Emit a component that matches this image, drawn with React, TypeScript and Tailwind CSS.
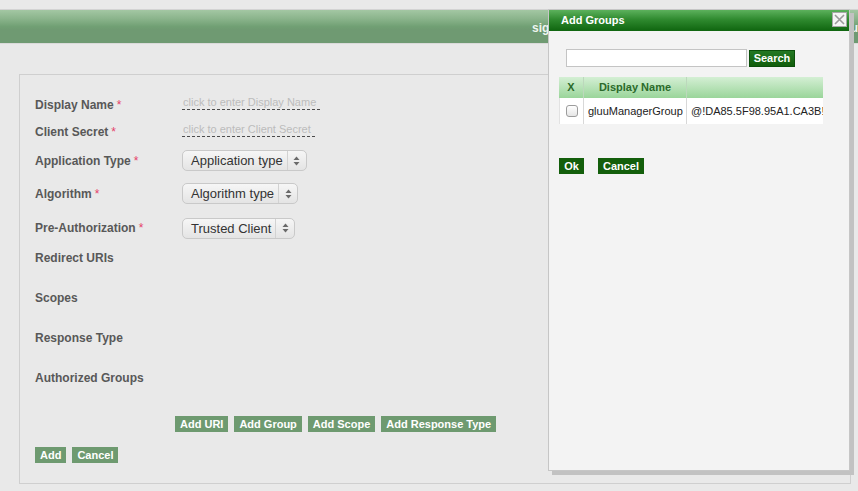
import React from "react";

const font = { fontFamily: '"Liberation Sans", Arial, Helvetica, sans-serif' };

function Req() {
  return <span className="ml-[3px] text-[12px] font-normal text-[#e5426b]">*</span>;
}

function Label({ children, req }: { children: React.ReactNode; req?: boolean }) {
  return (
    <div className="w-[147px] shrink-0 text-[12px] font-bold leading-[14px] text-[#585858]">
      {children}
      {req && <Req />}
    </div>
  );
}

function Placeholder({ text }: { text: string }) {
  return (
    <span className="-mt-[4px] inline-block border-b border-dashed border-[#4a4a4a] pr-[4px] pl-[1px] text-[11px] leading-[13px] text-[#bcbcbc]">
      {text}
    </span>
  );
}

function Arrows() {
  return (
    <svg width="7" height="10" viewBox="0 0 7 10">
      <path d="M3.5 0.5 L6.5 4 L0.5 4 Z" fill="#6a6a6a" />
      <path d="M3.5 9.5 L6.5 6 L0.5 6 Z" fill="#6a6a6a" />
    </svg>
  );
}

function Select({ text }: { text: string }) {
  return (
    <div className="flex h-[21px] items-center rounded-[5px] border border-[#c9c9c9] bg-[linear-gradient(to_bottom,#f6f6f6,#e4e4e4)] text-[13px] text-[#333]">
      <span className="pl-[8px] pr-[4px] leading-[19px]">{text}</span>
      <span className="flex h-full w-[19px] items-center justify-center border-l border-[#d2d2d2]">
        <Arrows />
      </span>
    </div>
  );
}

function GreenBtn({ children }: { children: React.ReactNode }) {
  return (
    <span className="flex h-[16px] items-center bg-[#6e9a70] px-[5px] text-[11px] font-bold text-white">
      {children}
    </span>
  );
}

function DarkBtn({ children, className = "" }: { children: React.ReactNode; className?: string }) {
  return (
    <span
      className={`flex h-[16px] items-center justify-center bg-[#135e0b] text-[11px] font-bold text-white ${className}`}
    >
      {children}
    </span>
  );
}

export default function App() {
  return (
    <div className="relative h-[491px] w-[858px] overflow-hidden bg-[#e9e9e9]" style={font}>
      {/* Top bar */}
      <div className="mt-[9px] flex h-[35px] items-center border-y border-t-[#d3d3d3] border-b-[#dadada] bg-[linear-gradient(to_bottom,#a3c7a3_0%,#8cb58d_25%,#71a074_50%,#6f9a72_60%,#6f9a72_100%)] text-[12px] font-bold text-[#eef4ee]">
        <span className="ml-[532px] pt-[2px]">signed in as admin</span>
        <span className="ml-auto mr-[-4px] pt-[2px]">Logout</span>
      </div>

      {/* Form panel */}
      <div className="ml-[19px] mt-[30px] h-[410px] w-[832px] border border-[#cfcfcf] pl-[15px] pt-[16px]">
        <div className="flex h-[27px] items-center">
          <Label req>Display Name</Label>
          <Placeholder text="click to enter Display Name" />
        </div>
        <div className="flex h-[27px] items-center">
          <Label req>Client Secret</Label>
          <Placeholder text="click to enter Client Secret" />
        </div>
        <div className="flex h-[31px] items-center">
          <Label req>Application Type</Label>
          <Select text="Application type" />
        </div>
        <div className="flex h-[35px] items-center">
          <Label req>Algorithm</Label>
          <Select text="Algorithm type" />
        </div>
        <div className="flex h-[34px] items-center">
          <Label req>Pre-Authorization</Label>
          <Select text="Trusted Client" />
        </div>

        <div className="pt-[6px]">
          {["Redirect URIs", "Scopes", "Response Type", "Authorized Groups"].map((l) => (
            <div key={l} className="h-[40px]">
              <Label>{l}</Label>
            </div>
          ))}
        </div>

        <div className="ml-[140px] mt-[5px] flex gap-[6px]">
          <GreenBtn>Add URI</GreenBtn>
          <GreenBtn>Add Group</GreenBtn>
          <GreenBtn>Add Scope</GreenBtn>
          <GreenBtn>Add Response Type</GreenBtn>
        </div>

        <div className="mt-[15px] flex gap-[6px]">
          <GreenBtn>Add</GreenBtn>
          <GreenBtn>Cancel</GreenBtn>
        </div>
      </div>

      {/* Add Groups dialog */}
      <div className="absolute left-[548px] top-[9px] h-[462px] w-[302px] border border-[#c6c6c6] bg-[#f3f3f3] shadow-[4px_4px_0_#c2c2c2]">
        <div className="relative flex h-[21px] items-center bg-[linear-gradient(to_bottom,#5cb15c,#2f8a2f_45%,#0f650f)] pl-[12px] text-[11px] font-bold text-white">
          Add Groups
          <span className="absolute right-[2px] top-[2px] flex h-[15px] w-[15px] items-center justify-center border border-[#a8a8a8] bg-[#f5f5f5]">
            <svg width="11" height="11" viewBox="0 0 11 11">
              <path d="M1 1 L10 10 M10 1 L1 10" stroke="#9a9a9a" strokeWidth="1.6" />
            </svg>
          </span>
        </div>

        <div className="ml-[17px] mt-[18px] flex items-center">
          <div className="h-[18px] w-[181px] border border-[#c4c4c4] bg-white" />
          <DarkBtn className="ml-[2px] h-[17px] w-[46px] border border-[#0b4f0b] bg-[linear-gradient(to_bottom,#237823,#115e0b)]">
            Search
          </DarkBtn>
        </div>

        <div className="ml-[10px] mt-[10px] w-[264px] overflow-hidden">
          <div className="w-[400px]">
            <div className="flex h-[21px] bg-[linear-gradient(to_bottom,#d4efd4,#9ad59a)] text-[11px] font-bold text-[#2b6a2b]">
              <div className="flex w-[25px] items-center justify-center border-r border-[#bcd8bc]">X</div>
              <div className="flex w-[103px] items-center justify-center border-r border-[#bcd8bc]">
                Display Name
              </div>
              <div className="flex-1" />
            </div>
            <div className="flex h-[26px] border-l border-[#e2e2e2] bg-white text-[11px] text-[#222]">
              <div className="flex w-[24px] items-center justify-center border-r border-[#d8d8d8]">
                <span className="h-[12px] w-[12px] rounded-[3px] border border-[#9c9c9c] bg-[linear-gradient(to_bottom,#ffffff,#e6e6e6)]" />
              </div>
              <div className="flex w-[103px] items-center border-r border-[#d8d8d8] pl-[4px]">
                gluuManagerGroup
              </div>
              <div className="flex flex-1 items-center pl-[4px]">@!DA85.5F98.95A1.CA3B!0001!5D2E.B3F6</div>
            </div>
          </div>
        </div>

        <div className="ml-[10px] mt-[34px] flex">
          <DarkBtn className="w-[25px]">Ok</DarkBtn>
          <DarkBtn className="ml-[14px] w-[46px]">Cancel</DarkBtn>
        </div>
      </div>
    </div>
  );
}
